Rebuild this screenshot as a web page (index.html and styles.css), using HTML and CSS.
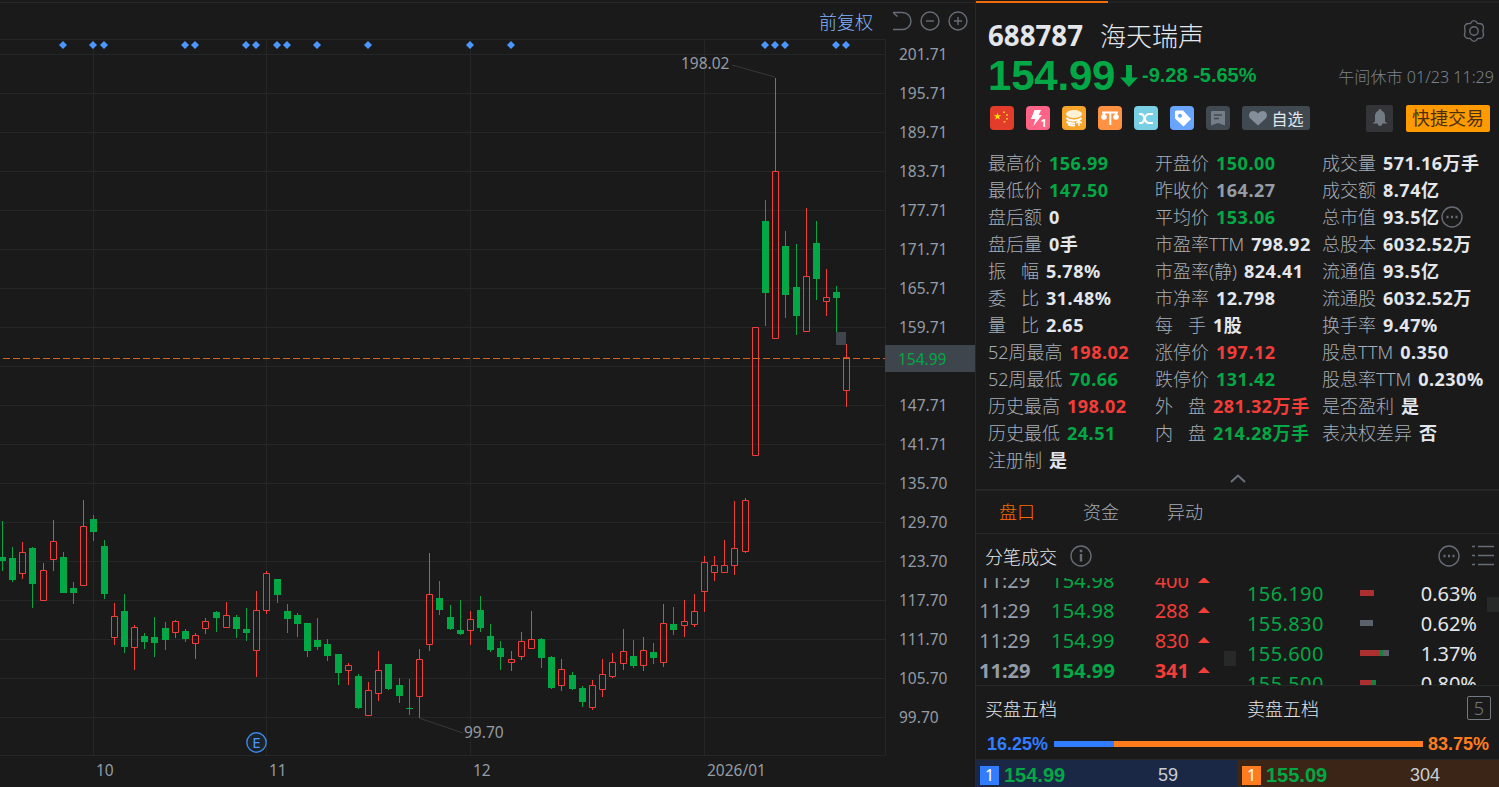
FILE: index.html
```html
<!DOCTYPE html>
<html lang="zh-CN">
<head>
    <meta charset="UTF-8">
    <meta name="viewport" content="width=device-width, initial-scale=1.0">
    <title>688787 海天瑞声</title>
    <link rel="stylesheet" href="styles.css">
</head>
<body>
    <main class="chart">
        <div class="toolbar">
            <span class="adjust">前复权</span>
            <svg class="tool undo" width="20" height="20" viewBox="0 0 20 20"><path d="M1 1.500H10.500A8.500 8.500 0 0 1 10.500 18.500H1M1.500 2L5.500 5.500"/></svg>
            <svg class="tool" width="20" height="20" viewBox="0 0 20 20"><circle cx="10" cy="10" r="9"/><path d="M6 10H14"/></svg>
            <svg class="tool" width="20" height="20" viewBox="0 0 20 20"><circle cx="10" cy="10" r="9"/><path d="M6 10H14M10 6V14"/></svg>
        </div>
        <svg class="kline" id="kline" width="975" height="748" viewBox="0 39 975 748">
            <g id="grid" class="grid"></g>
            <g id="marks" class="marks"></g>
            <g id="candles"></g>
            <path class="leader" d="M732 65L775 77M419 718L463 733"/>
            <text class="price" x="681" y="69">198.02</text>
            <text class="price" x="464" y="738">99.70</text>
            <path class="last-line" d="M3 358.5H885"/>
            <rect class="handle" x="836" y="332" width="10" height="13"/>
            <circle class="event-ring" cx="256.5" cy="742.5" r="9.7"/>
            <text class="event" x="256.5" y="748">E</text>
            <g id="axis" class="axis"></g>
            <rect class="tag" x="885" y="345" width="90" height="27"/>
            <text class="tag-text" x="898" y="364.5">154.99</text>
        </svg>
    </main>

    <aside class="panel">
        <div class="title">
            <b class="code">688787</b>
            <span class="name">海天瑞声</span>
            <svg class="tool gear" width="24" height="24" viewBox="0 0 24 24"><path d="M12 1.600Q14 1.600 15.200 4Q15.800 4.800 17 4.600Q19.800 4.300 21 6.500Q22 8.500 21.200 10.300Q20.700 12 21.200 13.700Q22 15.500 21 17.500Q19.800 19.700 17 19.400Q15.800 19.200 15.200 20Q14 22.400 12 22.400Q10 22.400 8.800 20Q8.200 19.200 7 19.400Q4.200 19.700 3 17.500Q2 15.500 2.800 13.700Q3.300 12 2.800 10.300Q2 8.500 3 6.500Q4.200 4.300 7 4.600Q8.200 4.800 8.800 4Q10 1.600 12 1.600Z"/><circle cx="12" cy="12" r="4.200"/></svg>
        </div>
        <div class="quote down">
            <b class="last">154.99</b>
            <svg width="18" height="22" viewBox="0 0 18 22"><path d="M6 0H12V12.500H18L9 22L0 12.500H6Z" fill="#02a845"/></svg>
            <b class="change">-9.28 -5.65%</b>
            <span class="time">午间休市 01/23 11:29</span>
        </div>
        <div class="badges">
            <svg width="24" height="24" viewBox="0 0 24 24"><rect width="24" height="24" rx="4" fill="#e43c2b"/><path d="M7.500 6.500L8.400 9.200H11.200L9 10.800L9.800 13.500L7.500 11.900L5.200 13.500L6 10.800L3.800 9.200H6.600Z" fill="#ffe300"/><path d="M13 5.500h2v1.500h-2zM16 8.300h2v1.500h-2zM16 12h2v1.500h-2zM13.500 15h2v1.500h-2z" fill="#fbc51b"/></svg>
            <svg width="24" height="24" viewBox="0 0 24 24"><rect width="24" height="24" rx="4" fill="#ff6486"/><path d="M8.500 4H15L12.800 9H16L7.500 20L9.300 13H5Z" fill="#fff"/><text x="14.500" y="20.500" class="mini">1</text></svg>
            <svg width="24" height="24" viewBox="0 0 24 24"><rect width="24" height="24" rx="4" fill="#f9a52b"/><ellipse cx="12" cy="8" rx="8" ry="4" fill="#fff1d8"/><path d="M4.500 12Q7 14.800 12.500 14.500Q17 14.500 19.500 12M4.500 15.500Q7 18 13 17.500" fill="none" stroke="#fff" stroke-width="2"/><path d="M6 18.500Q9 20 13 19.500M17 20V15M14.300 17.300L17 14.800L19.700 17.300" fill="none" stroke="#fff" stroke-width="1.500"/></svg>
            <svg width="24" height="24" viewBox="0 0 24 24"><rect width="24" height="24" rx="4" fill="#ff9142"/><path d="M4 6.500H20M12.300 6.500V19M7 6.500L5 10M17 6.500L19 10" fill="none" stroke="#fff" stroke-width="2"/><circle cx="6" cy="11" r="2.800" fill="#fff"/><circle cx="18" cy="11" r="2.800" fill="#fff"/></svg>
            <svg width="24" height="24" viewBox="0 0 24 24"><rect width="24" height="24" rx="4" fill="#79d0e4"/><path d="M5 8H7C12 8 9 17 15 17H19M5 17H7C12 17 9 8 15 8H19" fill="none" stroke="#fff" stroke-width="2.200"/></svg>
            <svg width="24" height="24" viewBox="0 0 24 24"><rect width="24" height="24" rx="4" fill="#69a5ff"/><path d="M5 6Q5 4.500 6.500 4.500H13L21 13L13.500 20.500L5 12.500Z" fill="#fff"/><circle cx="10" cy="9.800" r="2" fill="#69a5ff"/></svg>
            <svg width="24" height="24" viewBox="0 0 24 24"><rect width="24" height="24" rx="4" fill="#414950"/><path d="M5 6Q5 5 6 5H18Q19 5 19 6V19.500L12 17L5 19.500Z" fill="#737d87"/><path d="M8 9H16M8 12.500H13" stroke="#414950" stroke-width="1.300"/></svg>
            <span class="watch"><svg width="20" height="16" viewBox="0 0 20 16"><path d="M10 15.500L2.300 8.500C0 6 .8 1 5.500 1Q8.500 1 10 3.500Q11.500 1 14.500 1C19.200 1 20 6 17.700 8.500Z" fill="#838e9a"/></svg>自选</span>
            <span class="bell"><svg width="16" height="18" viewBox="0 0 16 18"><path d="M8 0Q9.500 0 9.500 1.700Q13 3 13 7V12.500L15.500 14.500H10.500Q10 17 8 17Q6 17 5.500 14.500H.5L3 12.500V7Q3 3 6.500 1.700Q6.500 0 8 0Z" fill="#737a83"/></svg></span>
            <span class="trade">快捷交易</span>
        </div>

        <div class="stats">
            <ul>
                <li>最高价<b class="down">156.99</b></li>
                <li>最低价<b class="down">147.50</b></li>
                <li>盘后额<b>0</b></li>
                <li>盘后量<b>0手</b></li>
                <li><i>振</i>幅<b>5.78%</b></li>
                <li><i>委</i>比<b>31.48%</b></li>
                <li><i>量</i>比<b>2.65</b></li>
                <li>52周最高<b class="up">198.02</b></li>
                <li>52周最低<b class="down">70.66</b></li>
                <li>历史最高<b class="up">198.02</b></li>
                <li>历史最低<b class="down">24.51</b></li>
                <li>注册制<b>是</b></li>
            </ul>
            <ul>
                <li>开盘价<b class="down">150.00</b></li>
                <li>昨收价<b class="flat">164.27</b></li>
                <li>平均价<b class="down">153.06</b></li>
                <li>市盈率TTM<b>798.92</b></li>
                <li>市盈率(静)<b>824.41</b></li>
                <li>市净率<b>12.798</b></li>
                <li><i>每</i>手<b>1股</b></li>
                <li>涨停价<b class="up">197.12</b></li>
                <li>跌停价<b class="down">131.42</b></li>
                <li><i>外</i>盘<b class="up">281.32万手</b></li>
                <li><i>内</i>盘<b class="down">214.28万手</b></li>
            </ul>
            <ul>
                <li>成交量<b>571.16万手</b></li>
                <li>成交额<b>8.74亿</b></li>
                <li>总市值<b>93.5亿</b><svg class="tool more" width="22" height="22" viewBox="0 0 22 22"><circle cx="11" cy="11" r="10"/><path class="dots" d="M5.500 11h2M10 11h2M14.500 11h2"/></svg></li>
                <li>总股本<b>6032.52万</b></li>
                <li>流通值<b>93.5亿</b></li>
                <li>流通股<b>6032.52万</b></li>
                <li>换手率<b>9.47%</b></li>
                <li>股息TTM<b>0.350</b></li>
                <li>股息率TTM<b>0.230%</b></li>
                <li>是否盈利<b>是</b></li>
                <li>表决权差异<b>否</b></li>
            </ul>
        </div>
        <div class="fold"><svg width="16" height="9" viewBox="0 0 16 9"><path d="M1 8L8 1.500L15 8" fill="none" stroke="#69717a" stroke-width="2"/></svg></div>

        <nav class="tabs">
            <span class="active">盘口</span>
            <span>资金</span>
            <span>异动</span>
        </nav>

        <div class="ticks-head">
            <span>分笔成交</span>
            <svg class="tool" width="22" height="22" viewBox="0 0 22 22"><circle cx="11" cy="11" r="10"/><path class="dots" d="M11 9V16.500M9.700 6h2.600"/></svg>
            <svg class="tool push" width="22" height="22" viewBox="0 0 22 22"><circle cx="11" cy="11" r="10"/><path class="dots" d="M5.500 11h2M10 11h2M14.500 11h2"/></svg>
            <svg class="tool list" width="22" height="22" viewBox="0 0 22 22"><path d="M0 1.500h3M6 1.500h16M0 10.500h3M6 10.500h16M0 19.500h3M6 19.500h16"/></svg>
        </div>

        <div class="ticks">
            <div class="trades">
                <div class="tick"><span>11:29</span><span class="down">154.98</span><span class="up">400</span><em></em></div>
                <div class="tick"><span>11:29</span><span class="down">154.98</span><span class="up">288</span><em></em></div>
                <div class="tick"><span>11:29</span><span class="down">154.99</span><span class="up">830</span><em></em></div>
                <div class="tick now"><span>11:29</span><span class="down">154.99</span><span class="up">341</span><em></em></div>
            </div>
            <span class="thumb left"></span>
            <div class="levels">
                <div class="level"><span class="down">156.190</span><span class="vol"><s class="buy" style="width: 14px"></s></span><span class="pct">0.63%</span></div>
                <div class="level"><span class="down">155.830</span><span class="vol"><s class="mid" style="width: 13px"></s></span><span class="pct">0.62%</span></div>
                <div class="level"><span class="down">155.600</span><span class="vol"><s class="buy" style="width: 19px"></s><s class="sell" style="width: 4px"></s><s class="mid" style="width: 6px"></s></span><span class="pct">1.37%</span></div>
                <div class="level"><span class="down">155.500</span><span class="vol"><s class="buy" style="width: 12px"></s><s class="sell" style="width: 4px"></s></span><span class="pct">0.80%</span></div>
            </div>
            <span class="thumb right"></span>
        </div>

        <div class="depth-head">
            <span>买盘五档</span>
            <span>卖盘五档</span>
            <span class="five">5</span>
        </div>
        <div class="ratio">
            <b class="bid-pct">16.25%</b>
            <span class="ratio-bar"><s style="width: 16.25%"></s></span>
            <b class="ask-pct">83.75%</b>
        </div>
        <div class="depth">
            <div class="side bid"><span class="no">1</span><b>154.99</b><span class="qty">59</span></div>
            <div class="side ask"><span class="no">1</span><b>155.09</b><span class="qty">304</span></div>
        </div>
    </aside>

    <script src="chart.js"></script>
</body>
</html>
```
FILE: styles.css
```css
body {
    display: flex;
    width: 1499px;
    height: 787px;
    margin: 0;
    overflow: hidden;
    background: #1a1a1a;
    color: #e3e7ec;
    font-family: "Noto Sans", "Noto Sans CJK SC", sans-serif;
    font-size: 18px;
}

svg {
    display: block;
    flex: none;
}

b {
    font-weight: 700;
}

.up {
    color: #f33d38;
}

.down {
    color: #02a845;
}

.flat {
    color: #949ca6;
}

.tool {
    fill: none;
    stroke: #676d77;
    stroke-width: 1.4;
}

.dots {
    stroke-width: 2.4;
}

/* chart */
.chart {
    display: flex;
    flex-direction: column;
    width: 975px;
    flex: none;
}

.toolbar {
    display: flex;
    align-items: center;
    justify-content: flex-end;
    gap: 8px;
    height: 36px;
    margin-top: 2px;
    padding-right: 7px;
    border-top: 1px solid #282828;
}

.adjust {
    margin-right: 11px;
    color: #82b4ff;
    font-weight: 300;
}

.kline {
    font-size: 15.5px;
}

.grid {
    stroke: #252626;
}

.marks {
    fill: #4c97ff;
}

.leader {
    stroke: #383838;
}

.price,
.axis {
    fill: #949ca6;
}

.last-line {
    stroke: #d4641b;
    stroke-dasharray: 7 3;
}

.handle {
    fill: #3e454c;
}

.tag {
    fill: #3e454c;
}

.tag-text {
    fill: #02a845;
}

.event-ring {
    fill: #1b242b;
    stroke: #4086e5;
    stroke-width: 1.4;
}

.event {
    fill: #4c97ff;
    font-size: 15px;
    text-anchor: middle;
}

.candle-up {
    fill: none;
    stroke: #f33d38;
}

.candle-down {
    fill: #02a845;
}

/* right panel */
.panel {
    width: 523px;
    height: 787px;
    flex: none;
    overflow: hidden;
    border-left: 1px solid #282828;
}

.title {
    display: flex;
    align-items: center;
    height: 50px;
    margin-top: 1px;
    padding: 15px 13px 0 12px;
    box-sizing: border-box;
    border-top: 2px solid;
    border-image: linear-gradient(to right, #f36a0a 132px, #222 132px) 1;
}

.code {
    font-size: 27.7px;
}

.name {
    margin-left: 17px;
    font-size: 26px;
    font-weight: 300;
}

.gear {
    margin: -8px 0 0 auto;
}

.quote {
    display: flex;
    align-items: center;
    height: 49px;
    padding: 0 5px 0 12px;
    font-family: "Liberation Sans", sans-serif;
}

.last {
    width: 132px;
    font-size: 42px;
    letter-spacing: -0.2px;
}

.change {
    margin-left: 4px;
    font-size: 20px;
}

.time {
    margin-left: auto;
    color: #7b828d;
    font-family: "Noto Sans", "Noto Sans CJK SC", sans-serif;
    font-size: 16.1px;
    font-weight: 300;
}

.badges {
    display: flex;
    align-items: center;
    gap: 12px;
    height: 36px;
    padding: 0 9px 0 14px;
}

.mini {
    fill: #fff;
    font-size: 11px;
    font-weight: bold;
}

.watch {
    display: flex;
    align-items: center;
    justify-content: center;
    gap: 3px;
    width: 68px;
    height: 24px;
    border-radius: 3px;
    background: #414950;
    font-size: 16px;
}

.bell {
    display: flex;
    align-items: center;
    justify-content: center;
    width: 27px;
    height: 27px;
    margin-left: auto;
    border-radius: 2px;
    background: #343539;
}

.trade {
    width: 84px;
    height: 27px;
    margin-left: 1px;
    border-radius: 2px;
    background: #ff9a00;
    color: #4b3109;
    line-height: 27px;
    text-align: center;
}

.stats {
    display: flex;
    height: 324px;
    padding: 14px 0 0 12px;
}

.stats ul {
    width: 167px;
    margin: 0;
    padding: 0;
    list-style: none;
}

.stats li {
    display: flex;
    height: 27px;
    color: #a5adb7;
    font-weight: 300;
    line-height: 27px;
    white-space: nowrap;
}

.stats i {
    margin-right: 15px;
    font-style: normal;
}

.stats b {
    margin-left: 7px;
    color: #e3e7ec;
    letter-spacing: 0.5px;
}

.stats b.up {
    color: #f33d38;
}

.stats b.down {
    color: #02a845;
}

.stats b.flat {
    color: #949ca6;
}

.more {
    margin: 2px 0 0 2px;
}

.fold {
    display: flex;
    justify-content: center;
    height: 15px;
    border-bottom: 2px solid #262727;
}

.tabs {
    display: flex;
    height: 42px;
    padding-left: 23px;
    gap: 48px;
    border-bottom: 1px solid #262727;
    color: #a5adb7;
    font-weight: 300;
    line-height: 42px;
}

.tabs .active {
    color: #ff6a00;
}

.ticks-head {
    display: flex;
    align-items: center;
    gap: 13px;
    height: 44px;
    padding: 0 5px 0 9px;
    font-weight: 300;
}

.push {
    margin-left: auto;
}

.list {
    margin-left: -1px;
}

.ticks {
    display: flex;
    height: 107px;
    overflow: hidden;
    border-bottom: 1px solid #262727;
    font-size: 20px;
}

.trades {
    width: 248px;
    margin-top: -13px;
}

.tick {
    display: flex;
    align-items: center;
    height: 30px;
    padding-left: 3px;
    color: #949ca6;
}

.tick span {
    width: 72px;
}

.tick .up {
    width: 66px;
    text-align: right;
}

.tick em {
    margin-left: 9px;
    border: 6px solid transparent;
    border-top: 0;
    border-bottom-color: #f33d38;
}

.tick .down {
    letter-spacing: 0.2px;
}

.now {
    font-weight: bold;
}

.thumb {
    width: 12px;
    height: 15px;
    background: #272828;
}

.left {
    margin-top: 73px;
}

.right {
    margin: 19px 0 0 auto;
}

.levels {
    width: 230px;
    margin-left: 11px;
}

.level {
    display: flex;
    align-items: center;
    height: 30px;
}

.level .down {
    width: 113px;
    letter-spacing: 0.4px;
}

.vol {
    display: flex;
    height: 6px;
}

.buy {
    background: #ad2f2f;
}

.sell {
    background: #17803d;
}

.mid {
    background: #5b626c;
}

.pct {
    margin-left: auto;
}

.depth-head {
    display: flex;
    align-items: center;
    height: 43px;
    padding: 0 8px 0 9px;
    font-weight: 300;
}

.depth-head span:first-child {
    width: 262px;
}

.five {
    width: 22px;
    height: 22px;
    margin-left: auto;
    border: 1px solid #737a83;
    border-radius: 2px;
    color: #737a83;
    line-height: 22px;
    text-align: center;
}

.ratio {
    display: flex;
    align-items: center;
    height: 30px;
    padding: 0 10px 0 11px;
    font-family: "Liberation Sans", sans-serif;
}

.ratio-bar {
    flex: 1;
    height: 6px;
    margin: 0 5px 0 6px;
    background: #ff7d1f;
}

.ratio-bar s {
    display: block;
    height: 6px;
    background: #327dff;
}

.bid-pct {
    color: #327dff;
}

.ask-pct {
    color: #ff7d1f;
}

.depth {
    display: flex;
    border-top: 1px solid #262727;
}

.side {
    display: flex;
    align-items: center;
    width: 261px;
    height: 30px;
    padding-left: 4px;
    box-sizing: border-box;
    font-family: "Liberation Sans", sans-serif;
}

.side b {
    width: 90px;
    margin-left: 5px;
    color: #02a845;
    font-size: 20px;
}

.bid {
    background: #1a2745;
}

.ask {
    width: 262px;
    padding-left: 5px;
    background: #3a2516;
}

.no {
    width: 19px;
    height: 19px;
    background: #327dff;
    color: #fff;
    font-family: "Noto Sans", sans-serif;
    font-size: 16px;
    line-height: 19px;
    text-align: center;
}

.ask .no {
    background: #ff7d1f;
}

.qty {
    width: 84px;
    color: #c9ced4;
    text-align: right;
}
```
FILE: chart.js
```js
// x, high, low, body top, body bottom, rising
const candles = [
    [2, 521, 571, 557, 561, 0], [12, 547, 582, 558, 580, 0], [22, 542, 579, 552, 574, 1], [32, 547, 608, 548, 584, 0],
    [43, 563, 601, 570, 601, 1], [53, 520, 571, 541, 560, 1], [63, 552, 593, 557, 593, 0], [73, 582, 604, 588, 593, 0],
    [83, 500, 586, 526, 586, 1], [93, 515, 541, 519, 532, 0], [104, 540, 599, 546, 594, 0], [114, 603, 645, 616, 638, 1],
    [124, 594, 653, 611, 647, 0], [134, 625, 670, 627, 648, 1], [144, 633, 649, 636, 642, 0], [154, 617, 657, 637, 643, 0],
    [165, 622, 650, 628, 640, 0], [175, 620, 638, 621, 633, 1], [185, 629, 642, 631, 639, 0], [195, 633, 659, 635, 644, 1],
    [205, 618, 634, 621, 629, 1], [216, 611, 632, 612, 618, 0], [226, 602, 628, 615, 628, 1], [236, 615, 638, 617, 629, 0],
    [246, 608, 641, 629, 633, 0], [256, 591, 677, 610, 651, 1], [266, 571, 614, 573, 611, 1], [277, 579, 603, 579, 595, 0],
    [287, 604, 633, 611, 619, 0], [297, 613, 637, 615, 624, 0], [307, 623, 657, 623, 651, 0], [317, 618, 650, 640, 647, 0],
    [327, 639, 661, 644, 656, 0], [338, 654, 685, 654, 673, 0], [348, 663, 685, 665, 671, 1], [358, 674, 709, 676, 708, 0],
    [368, 682, 716, 690, 716, 1], [378, 651, 701, 670, 694, 1], [388, 664, 690, 664, 689, 0], [399, 678, 703, 685, 696, 0],
    [409, 679, 715, 708, 709, 0], [419, 649, 718, 659, 697, 1], [429, 553, 651, 594, 645, 1], [439, 581, 615, 598, 610, 0],
    [450, 605, 630, 617, 629, 0], [460, 600, 635, 630, 634, 0], [470, 611, 645, 619, 631, 1], [480, 596, 632, 610, 628, 0],
    [490, 624, 652, 636, 650, 0], [500, 641, 670, 648, 657, 0], [511, 651, 671, 659, 663, 1], [521, 632, 660, 641, 657, 1],
    [531, 611, 649, 639, 649, 1], [541, 638, 668, 639, 658, 0], [551, 656, 689, 657, 688, 0], [561, 659, 691, 669, 686, 1],
    [572, 672, 690, 675, 689, 0], [582, 686, 707, 688, 702, 0], [592, 680, 710, 685, 708, 1], [602, 659, 697, 674, 690, 1],
    [612, 653, 678, 662, 677, 1], [623, 629, 670, 651, 664, 1], [633, 640, 668, 656, 666, 0], [643, 637, 671, 650, 666, 1],
    [653, 643, 664, 652, 658, 0], [663, 604, 667, 623, 663, 1], [673, 607, 635, 624, 630, 0], [684, 600, 637, 621, 626, 1],
    [694, 594, 627, 611, 625, 1], [704, 556, 612, 562, 592, 1], [714, 556, 581, 565, 573, 1], [724, 540, 573, 565, 573, 1],
    [734, 501, 575, 548, 566, 1], [745, 498, 553, 500, 552, 1], [755, 327, 456, 327, 456, 1], [765, 200, 326, 221, 293, 0],
    [775, 78, 339, 171, 339, 1], [785, 231, 318, 246, 295, 0], [796, 244, 335, 287, 316, 0], [806, 208, 332, 276, 332, 1],
    [816, 221, 300, 243, 279, 0], [826, 269, 316, 297, 302, 1], [836, 286, 332, 292, 298, 0], [846, 344, 407, 357, 391, 1]
];

const prices = ['201.71', '195.71', '189.71', '183.71', '177.71', '171.71', '165.71', '159.71', '',
    '147.71', '141.71', '135.70', '129.70', '123.70', '117.70', '111.70', '105.70', '99.70'];
const months = [[93, '10'], [266, '11'], [470, '12'], [704, '2026/01']];
const events = [63, 93, 104, 185, 195, 246, 256, 277, 287, 317, 368, 470, 511, 765, 775, 785, 836, 846];

let grid = '<path d="M0 39.5H885.5V755.5H0" fill="none"/>';
let axis = '';
prices.forEach((p, i) => {
    const y = 54 + i * 39;
    grid += `<path d="M0 ${y + 0.5}H885"/>`;
    axis += `<text x="899" y="${y + 6}">${p}</text>`;
});
months.forEach(([x, label]) => {
    grid += `<path d="M${x + 0.5} 39V755"/>`;
    axis += `<text x="${x + 3}" y="776">${label}</text>`;
});

document.getElementById('grid').innerHTML = grid;
document.getElementById('axis').innerHTML = axis;
document.getElementById('marks').innerHTML = events
    .map(x => `<path d="M${x} 41L${x + 4} 45L${x} 49L${x - 4} 45Z"/>`).join('');
document.getElementById('candles').innerHTML = candles.map(([x, high, low, top, bottom, rising]) => {
    if (rising) {
        return `<path class="candle-up" d="M${x + 0.5} ${high}V${top}M${x + 0.5} ${bottom}V${low}M${x - 2.5} ${top + 0.5}h6V${bottom - 0.5}h-6Z"/>`;
    }
    return `<path class="candle-down" d="M${x} ${high}h1V${low}h-1ZM${x - 3} ${top}h7V${bottom}h-7Z"/>`;
}).join('');
```
